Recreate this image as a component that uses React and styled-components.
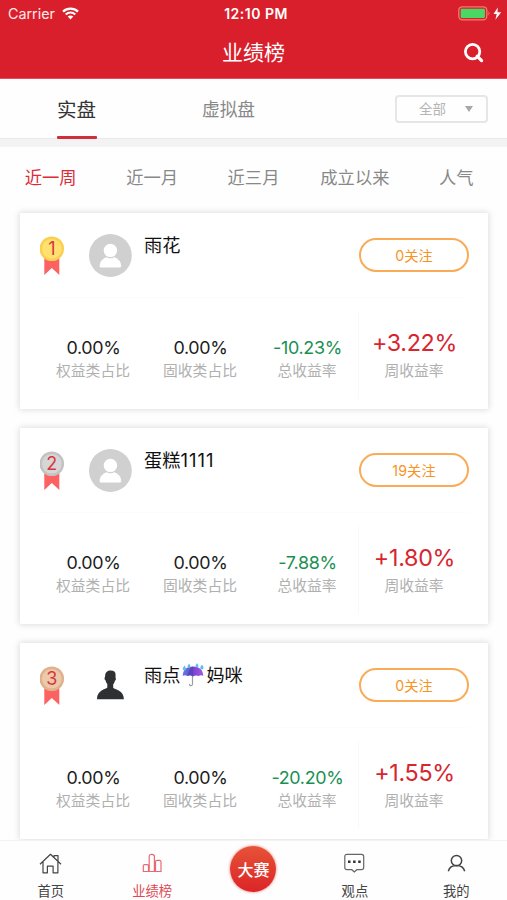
import React from "react";
import styled, { createGlobalStyle } from "styled-components";

const GlobalStyle = createGlobalStyle`
  * {
    box-sizing: border-box;
  }
  body {
    margin: 0;
    background: #fff;
    font-family: Inter, "Noto Sans CJK SC", sans-serif;
    overflow: hidden;
  }
  svg {
    display: block;
  }
`;

const Screen = styled.div`
  display: flex;
  flex-direction: column;
  width: 507px;
  height: 900px;
  overflow: hidden;
  background: #fefefe;
`;

const Header = styled.header`
  flex: none;
  height: 79px;
  background: #da1f2c;
  color: #fff;
  border-bottom: 1px solid #e4505a;
`;

const StatusBar = styled.div`
  display: grid;
  grid-template-columns: 1fr auto 1fr;
  align-items: center;
  height: 27px;
  padding: 0 5px 0 8px;
  font-size: 14px;
  line-height: 20px;
`;

const Carrier = styled.div`
  display: flex;
  align-items: center;
  gap: 7px;
  color: #ffe9ea;
  font-size: 14.3px;
`;

const Clock = styled.div`
  padding-left: 2px;
  font-weight: 600;
  font-size: 14px;
  letter-spacing: 0.5px;
`;

const Power = styled.div`
  display: flex;
  justify-content: flex-end;
`;

const TitleBar = styled.div`
  display: grid;
  grid-template-columns: 1fr auto 1fr;
  align-items: center;
  height: 51px;
  padding-right: 23px;
  padding-left: 23px;
`;

const Title = styled.h1`
  grid-column: 2;
  margin: 0;
  padding-top: 1px;
  font-size: 21px;
  line-height: 30px;
  font-weight: 400;
`;

const SearchButton = styled.div`
  justify-self: end;
`;

const Tabs = styled.div`
  flex: none;
  display: flex;
  height: 68px;
  border-bottom: 8px solid #f3f3f3;
  box-shadow: inset 0 -1px 0 #e9e9e9;
`;

const Tab = styled.div`
  display: flex;
  flex-direction: column;
  align-items: center;
  justify-content: space-between;
  width: 152px;
  height: 60px;
  padding-top: 16px;
  padding-left: 1px;
  font-size: ${p => (p.$active ? "19.5px" : "17.7px")};
  line-height: 30px;
  color: ${p => (p.$active ? "#333" : "#888")};

  &::after {
    content: "";
    width: 40px;
    height: 3px;
    border-radius: 1px;
    background: ${p => (p.$active ? "#cf2f3b" : "transparent")};
  }
`;

const Select = styled.div`
  display: flex;
  align-items: center;
  justify-content: space-between;
  width: 93px;
  height: 28px;
  margin: 16px 19px 0 auto;
  padding: 0 13px 0 22px;
  border: 2px solid #e6e6e6;
  border-radius: 4px;
  font-size: 13.5px;
  line-height: 20px;
  color: #b5b5b5;
`;

const Arrow = styled.i`
  border: 4.5px solid transparent;
  border-top: 6px solid #a8a8a8;
  border-bottom: 0;
`;

const Filters = styled.div`
  flex: none;
  display: grid;
  grid-template-columns: repeat(5, 1fr);
  height: 66px;
  padding-top: 16px;
`;

const Filter = styled.div`
  text-align: center;
  font-size: 17.3px;
  line-height: 30px;
  color: ${p => (p.$active ? "#da2b37" : "#888")};
`;

const List = styled.div`
  flex: 1;
  min-height: 0;
  display: flex;
  flex-direction: column;
  gap: 19px;
  padding: 0 19px 0 20px;
`;

const Card = styled.div`
  flex: none;
  height: 196px;
  padding: 0 20px;
  background: #fff;
  border-radius: 1px;
  box-shadow: 0 0 6px 1px rgba(0, 0, 0, 0.13);
`;

const CardTop = styled.div`
  display: flex;
  height: 85px;
  border-bottom: 1px solid #fcfcfc;
`;

const MedalBox = styled.div`
  width: 49px;
  padding-top: 22px;
`;

const AvatarBox = styled.div`
  width: 55px;
  padding-top: 21px;
`;

const Name = styled.div`
  display: flex;
  align-items: center;
  gap: 2px;
  height: 26px;
  margin-top: 19px;
  font-size: 18.2px;
  line-height: 28px;
  color: #111;
`;

const Digits = styled.span`
  margin-left: -2px;
  font-size: 18.5px;
  letter-spacing: 1px;
`;

const Follow = styled.div`
  width: 110px;
  height: 34px;
  margin: 25px -1px 0 auto;
  border: 2px solid #f9ab58;
  border-radius: 17px;
  text-align: center;
  font-size: 14.2px;
  line-height: 32px;
  letter-spacing: 0.1px;
  color: #f7941f;
`;

const Stats = styled.div`
  display: grid;
  grid-template-columns: repeat(4, 107px);
  height: 111px;
  margin-left: -1px;
  padding-top: 13px;
`;

const Stat = styled.div`
  display: flex;
  flex-direction: column;
  justify-content: flex-end;
  height: 88px;
  margin-left: ${p => (p.$big ? "-2px" : "0")};
  padding-left: ${p => (p.$big ? "2px" : "0")};
  padding-bottom: 17px;
  text-align: center;
  border-left: 1px solid ${p => (p.$big ? "#f9f9f9" : "transparent")};
`;

const Value = styled.div`
  font-size: ${p => (p.$big ? "23.3px" : "17.9px")};
  line-height: ${p => (p.$big ? "30px" : "22px")};
  letter-spacing: -0.3px;
  padding-left: 1px;
  padding-bottom: ${p => (p.$big ? "2px" : "1px")};
  color: ${p => p.$color || "#1c1c1c"};
`;

const Label = styled.div`
  font-size: 14.8px;
  line-height: 22px;
  color: #b0b0b0;
`;

const TabBar = styled.nav`
  flex: none;
  display: grid;
  grid-template-columns: repeat(5, 1fr);
  height: 60px;
  background: #fefefe;
  border-top: 1px solid #f3f3f3;
  z-index: 1;
`;

const NavItem = styled.div`
  display: flex;
  flex-direction: column;
  align-items: center;
  gap: 7px;
  padding-top: 12px;
  font-size: 13.3px;
  line-height: 20px;
  color: ${p => (p.$active ? "#e04752" : "#444")};
`;

const Contest = styled.div`
  justify-self: center;
  width: 46px;
  height: 46px;
  margin-top: 5px;
  border-radius: 50%;
  background: linear-gradient(#e65338, #dc2427);
  box-shadow: 0 0 3px rgba(224, 50, 40, 0.7);
  text-align: center;
  font-size: 16px;
  line-height: 48px;
  font-weight: 500;
  color: #fff;
`;

const WifiIcon = () => (
  <svg width="17" height="13" viewBox="0 0 17 13" fill="none" stroke="#fff">
    <path d="M1 4.6C5.2.6 11.8.6 16 4.6" strokeWidth="2.2" />
    <path d="M3.7 7.5C6.4 4.9 10.6 4.9 13.3 7.5" strokeWidth="2.1" />
    <path d="M8.5 12.5 5.7 9.6c1.6-1.5 4-1.5 5.6 0z" fill="#fff" stroke="none" />
  </svg>
);

const BatteryIcon = () => (
  <svg width="44" height="15" viewBox="0 0 44 15">
    <rect x="0.8" y="0.8" width="28" height="13" rx="3.5" fill="none" stroke="#f07d72" strokeWidth="1.3" />
    <rect x="2.7" y="2.7" width="24.2" height="9.2" rx="1" fill="#4bd763" />
    <path d="M30.5 5.2q2 2.2 0 4.4z" fill="#f07d72" />
    <path d="m39.8 1.500-4.300 6.500h3.200l-1.300 5.800 5.800-7.600h-3.700z" fill="#fff" />
  </svg>
);

const SearchIcon = () => (
  <svg width="20" height="20" viewBox="0 0 20 20" fill="none" stroke="#fff" strokeWidth="2.8">
    <circle cx="8.600" cy="8.600" r="7.200" />
    <path d="m13.200 13.200 4.400 4.400" strokeWidth="3.200" strokeLinecap="round" />
  </svg>
);

const medals = {
  1: ["#fbd050", "#ffe070"],
  2: ["#c3c3c3", "#d6d6d6"],
  3: ["#deb18f", "#edc9a9"]
};

const Medal = ({ rank }) => (
  <svg width="25" height="40" viewBox="0 0 25 40">
    <path d="M4.3 22h15v18l-7.5-7-7.5 7z" fill="#fd6262" />
    <circle cx="11.8" cy="13.7" r="12.3" fill={medals[rank][0]} />
    <circle cx="11.8" cy="13.7" r="9.8" fill={medals[rank][1]} />
    <text
      x="11.8"
      y="20.2"
      textAnchor="middle"
      fontFamily="Inter, sans-serif"
      fontSize="18"
      fill="#d8363d"
    >
      {rank}
    </text>
  </svg>
);

const Avatar = () => (
  <svg width="43" height="43" viewBox="0 0 43 43">
    <circle cx="21.4" cy="21.5" r="21.4" fill="#d0d0d0" />
    <g fill="#fff">
      <circle cx="21.4" cy="16.4" r="6.7" />
      <path d="M11.2 33c-.6-4.500 2-8 6.400-9.300 2.400 1.500 5.200 1.500 7.600 0 4.400 1.300 7 4.800 6.400 9.300z" stroke="#fff" strokeLinejoin="round" />
    </g>
  </svg>
);

const Portrait = () => (
  <svg width="43" height="43" viewBox="0 0 43 43">
    <path
      d="M16.200 11.500c0-3 2.200-5 5.400-5 3.300 0 5 1.200 5 4.200l-.1 2.700c.7.5.5 2.800-.6 3.300-.4 1.700-1 2.800-1.700 3.500v3.500c1.400 1.800 10.700 2.200 10.700 11.500H8c0-9.300 8.900-9.900 10.300-11.700V20c-.9-.9-1.400-2-1.700-3.500-1.200-.5-1.400-2.800-.7-3.200z"
      fill="#2f3031"
    />
  </svg>
);

const Umbrella = () => (
  <svg width="22" height="24" viewBox="0 0 22 24">
    <defs>
      <linearGradient id="canopy">
        <stop offset="0" stopColor="#5a7ce8" />
        <stop offset="0.5" stopColor="#7b3fd0" />
        <stop offset="1" stopColor="#a25be8" />
      </linearGradient>
    </defs>
    <path d="M10.500 11v10q-.2 2-2 1.600-1.200-.3-1-1.800" fill="none" stroke="#999da4" strokeWidth="1.200" />
    <path d="M.8 12.900C.5 6.500 5.600 3.500 11 3.500s10.500 3 10.200 9.400q-2.300-1.400-4.500.2-2.800-1.500-5.700.4-2.900-1.900-5.700-.4-2.200-1.600-4.500-.2z" fill="url(#canopy)" />
    <path d="M11 3.500Q6.500 6 5.600 12.600q2.700-1.500 5.400.3z" fill="#5549b8" />
    <g fill="#60bdf0">
      <path d="M2.500 2.500q-3.500 4.500 0 5 3-.5 0-5z" />
      <path d="M7 .5q-3 4 0 4.500 3-.5 0-4.500z" />
      <path d="M15 0q-3 4 0 4.500 3-.500 0-4.500z" />
      <path d="M20 1.500q-3.500 4.500 0 5 3-.5 0-5z" />
    </g>
  </svg>
);

const HomeIcon = () => (
  <svg width="23" height="21" viewBox="0 0 23 21" fill="none" stroke="#444" strokeWidth="1.200" strokeLinejoin="round">
    <path d="M1 11.200 11.500 1.300 22 11.200M4 9v10.800h4.400v-6.600h5.700v6.600h4.800V9M15 4.200V2.700h4v5.200" />
  </svg>
);

const ChartIcon = () => (
  <svg width="21" height="21" viewBox="0 0 21 21" fill="none" stroke="#e76a73" strokeWidth="1.200">
    <path d="M1.300 18.500V13q0-1.300 1.300-1.300h2.600q1.300 0 1.300 1.300v5.500zM7.200 18.500V3.500q0-2.200 2.600-2.200t2.600 2.200v15zM13.500 18.500V9q0-1.600 1.500-1.600h2.500q1.500 0 1.500 1.600v9.500z" />
  </svg>
);

const ChatIcon = () => (
  <svg width="23" height="21" viewBox="0 0 23 21">
    <path
      d="M4 1.300h14.500q2.200 0 2.200 2.200v11q0 2.200-2.200 2.200h-4.700L11.300 19l-2.500-2.300H4q-2.200 0-2.200-2.200v-11q0-2.200 2.200-2.200z"
      fill="none"
      stroke="#666"
      strokeWidth="1.200"
    />
    <path d="M5 7.600h2.500v2.500H5zM10.100 7.600h2.500v2.500h-2.500zM15.200 7.600h2.500v2.500h-2.500z" fill="#333" />
  </svg>
);

const UserIcon = () => (
  <svg width="21" height="21" viewBox="0 0 21 21" fill="none" stroke="#444" strokeWidth="1.500">
    <circle cx="10.500" cy="7.600" r="5.200" />
    <path d="M2.300 18.300c1-3.800 4-5.700 8.200-5.700s7.200 1.900 8.200 5.700" />
  </svg>
);

const filters = ["近一周", "近一月", "近三月", "成立以来", "人气"];

const data = [
  {
    name: "雨花",
    follow: 0,
    total: "-10.23%",
    week: "+3.22%"
  },
  {
    name: (
      <>
        <span>蛋糕</span>
        <Digits>1111</Digits>
      </>
    ),
    follow: 19,
    total: "-7.88%",
    week: "+1.80%"
  },
  {
    name: (
      <>
        <span>雨点</span>
        <Umbrella />
        <span>妈咪</span>
      </>
    ),
    follow: 0,
    total: "-20.20%",
    week: "+1.55%",
    portrait: true
  }
];

const RankCard = ({ item, rank }) => (
  <Card>
    <CardTop>
      <MedalBox>
        <Medal rank={rank} />
      </MedalBox>
      <AvatarBox>{item.portrait ? <Portrait /> : <Avatar />}</AvatarBox>
      <Name>{item.name}</Name>
      <Follow>{item.follow}关注</Follow>
    </CardTop>
    <Stats>
      <Stat>
        <Value>0.00%</Value>
        <Label>权益类占比</Label>
      </Stat>
      <Stat>
        <Value>0.00%</Value>
        <Label>固收类占比</Label>
      </Stat>
      <Stat>
        <Value $color="#199052">{item.total}</Value>
        <Label>总收益率</Label>
      </Stat>
      <Stat $big>
        <Value $big $color="#d7262f">
          {item.week}
        </Value>
        <Label>周收益率</Label>
      </Stat>
    </Stats>
  </Card>
);

const App = () => {
  return (
    <Screen>
      <GlobalStyle />
      <Header>
        <StatusBar>
          <Carrier>
            Carrier
            <WifiIcon />
          </Carrier>
          <Clock>12:10 PM</Clock>
          <Power>
            <BatteryIcon />
          </Power>
        </StatusBar>
        <TitleBar>
          <Title>业绩榜</Title>
          <SearchButton>
            <SearchIcon />
          </SearchButton>
        </TitleBar>
      </Header>

      <Tabs>
        <Tab $active>实盘</Tab>
        <Tab>虚拟盘</Tab>
        <Select>
          全部
          <Arrow />
        </Select>
      </Tabs>

      <Filters>
        {filters.map((text, i) => (
          <Filter key={text} $active={i === 0}>
            {text}
          </Filter>
        ))}
      </Filters>

      <List>
        {data.map((item, i) => (
          <RankCard key={i} item={item} rank={i + 1} />
        ))}
      </List>

      <TabBar>
        <NavItem>
          <HomeIcon />
          首页
        </NavItem>
        <NavItem $active>
          <ChartIcon />
          业绩榜
        </NavItem>
        <Contest>大赛</Contest>
        <NavItem>
          <ChatIcon />
          观点
        </NavItem>
        <NavItem>
          <UserIcon />
          我的
        </NavItem>
      </TabBar>
    </Screen>
  );
};

export default App;
